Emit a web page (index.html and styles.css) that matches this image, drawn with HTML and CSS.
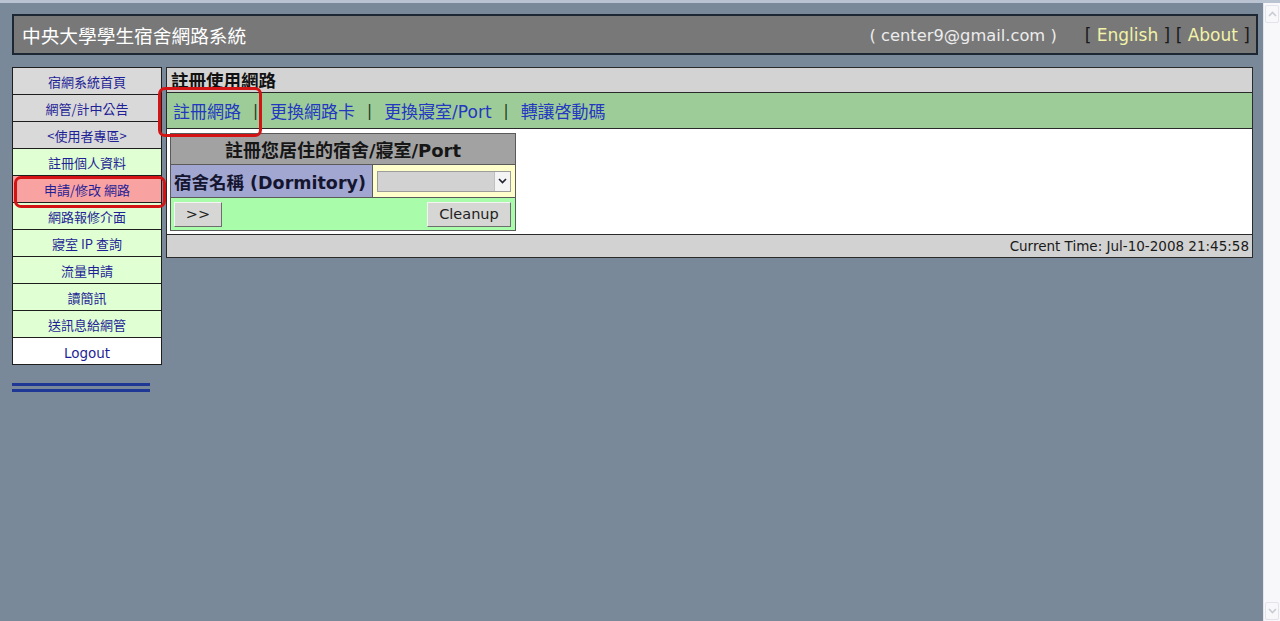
FILE: index.html
```html
<!DOCTYPE html>
<html lang="zh-Hant">
<head>
  <meta charset="UTF-8">
  <title>中央大學學生宿舍網路系統</title>
  <link rel="stylesheet" href="styles.css">
</head>
<body>

<div class="window">
  <div class="viewport">

    <header class="topbar">
      <div class="site-title">中央大學學生宿舍網路系統</div>
      <div class="topbar-right">
        <span class="email">( center9@gmail.com )</span>
        <span class="langs"><span class="br">[</span> <a href="#">English</a> <span class="br">]</span> <span class="br">[</span> <a href="#">About</a> <span class="br">]</span></span>
      </div>
    </header>

    <div class="layout">
      <aside class="sidebar">
        <ul class="menu">
          <li class="grey"><a href="#">宿網系統首頁</a></li>
          <li class="grey"><a href="#">網管/計中公告</a></li>
          <li class="grey"><a href="#">&lt;使用者專區&gt;</a></li>
          <li class="green"><a href="#">註冊個人資料</a></li>
          <li class="pink"><a href="#">申請/修改 網路</a><span class="mark mark-menu"></span></li>
          <li class="green"><a href="#">網路報修介面</a></li>
          <li class="green"><a href="#">寢室 IP 查詢</a></li>
          <li class="green"><a href="#">流量申請</a></li>
          <li class="green"><a href="#">讀簡訊</a></li>
          <li class="green"><a href="#">送訊息給網管</a></li>
          <li class="white"><a href="#" class="latin">Logout</a></li>
        </ul>
        <div class="double-rule"></div>
      </aside>

      <main class="panel">
        <div class="panel-title">註冊使用網路</div>
        <nav class="subnav">
          <a href="#">註冊網路</a>
          <span class="sep">|</span>
          <a href="#">更換網路卡</a>
          <span class="sep">|</span>
          <a href="#">更換寢室/Port</a>
          <span class="sep">|</span>
          <a href="#">轉讓啓動碼</a>
          <span class="mark mark-nav"></span>
        </nav>
        <div class="panel-body">
          <table class="reg-form">
            <tr>
              <th colspan="2">註冊您居住的宿舍/寢室/Port</th>
            </tr>
            <tr>
              <td class="label">宿舍名稱 (Dormitory)</td>
              <td class="field">
                <div class="select">
                  <span class="select-value"></span>
                  <span class="select-arrow">
                    <svg width="9" height="6" viewBox="0 0 9 6"><path d="M1 1 L4.5 4.5 L8 1" fill="none" stroke="#223" stroke-width="1.6"/></svg>
                  </span>
                </div>
              </td>
            </tr>
            <tr class="actions">
              <td colspan="2">
                <div class="btn-row">
                  <button type="button">&gt;&gt;</button>
                  <button type="button">Cleanup</button>
                </div>
              </td>
            </tr>
          </table>
        </div>
        <div class="panel-foot">Current Time: Jul-10-2008 21:45:58</div>
      </main>
    </div>

  </div>

  <div class="scrollbar">
    <span class="sb-btn">
      <svg width="9" height="6" viewBox="0 0 9 6"><path d="M1 5 L4.5 1.5 L8 5" fill="none" stroke="#c8ccd4" stroke-width="1.6"/></svg>
    </span>
    <span class="sb-btn">
      <svg width="9" height="6" viewBox="0 0 9 6"><path d="M1 1 L4.5 4.5 L8 1" fill="none" stroke="#c8ccd4" stroke-width="1.6"/></svg>
    </span>
  </div>
</div>

</body>
</html>
```

FILE: styles.css
```css
body {
  margin: 0;
  font-family: "DejaVu Sans", "Noto Sans CJK TC", sans-serif;
  background: #7a8999;
  overflow: hidden;
}

a {
  text-decoration: none;
}

.window {
  display: flex;
  height: 621px;
  box-sizing: border-box;
  border-top: 3px solid #b9c3d1;
}

.viewport {
  flex: 1;
  min-width: 0;
}

/* top bar */
.topbar {
  margin: 11px 5px 0 12px;
  height: 41px;
  box-sizing: border-box;
  border: 2px solid #1d2633;
  background: #787878;
  display: flex;
  justify-content: space-between;
  align-items: center;
  padding: 0 6px 0 8px;
}

.site-title {
  font-family: "Noto Sans CJK TC", sans-serif;
  font-size: 18.7px;
  color: #fff;
}

.topbar-right {
  display: flex;
  align-items: baseline;
  gap: 28px;
}

.email {
  color: #ececec;
  font-size: 16.3px;
}

.langs {
  color: #1a1a1a;
  font-size: 17px;
}

.langs a {
  color: #f2f2a8;
}

.br {
  color: #1a1a1a;
}

/* layout */
.layout {
  display: flex;
  gap: 4px;
  margin: 12px 10px 0 12px;
  align-items: flex-start;
}

.sidebar {
  width: 150px;
  flex: none;
}

.menu {
  list-style: none;
  margin: 0;
  padding: 0;
  border: 1px solid #1e1e1e;
  border-bottom: none;
}

.menu li {
  position: relative;
  height: 26px;
  border-bottom: 1px solid #1e1e1e;
  display: flex;
  align-items: center;
  justify-content: center;
}

.menu a {
  font-family: "Noto Sans CJK TC", sans-serif;
  font-size: 13px;
  color: #1f1f96;
}

.menu a.latin {
  font-family: "DejaVu Sans", sans-serif;
  font-size: 13.5px;
  padding-top: 3px;
}

.menu .grey {
  background: #d9d9d9;
}

.menu .green {
  background: #e0ffd2;
}

.menu .pink {
  background: #f9a2a2;
}

.menu .white {
  background: #fff;
}

.double-rule {
  width: 138px;
  height: 3px;
  margin-top: 18px;
  border-top: 3px solid #1f3795;
  border-bottom: 3px solid #1f3795;
}

/* red annotation boxes */
.mark {
  position: absolute;
  z-index: 2;
  border: 3px solid #d41414;
  border-radius: 7px;
  pointer-events: none;
}

.mark-menu {
  top: 0;
  left: 1px;
  right: -5px;
  bottom: -6px;
}

.mark-nav {
  top: -6px;
  left: -9px;
  width: 98px;
  height: 44px;
}

/* main panel */
.panel {
  flex: 1;
  border: 1px solid #2a2a2a;
  background: #fff;
}

.panel-title {
  height: 24px;
  line-height: 24px;
  background: #d3d3d3;
  border-bottom: 1px solid #2a2a2a;
  padding-left: 4px;
  font-family: "Noto Sans CJK TC", sans-serif;
  font-weight: bold;
  font-size: 17.5px;
  color: #111;
}

.subnav {
  position: relative;
  height: 35px;
  background: #9dcc98;
  border-bottom: 1px solid #2a2a2a;
  display: flex;
  align-items: center;
  padding-left: 6px;
  gap: 12px;
  font-size: 17px;
}

.subnav a {
  color: #2337c0;
}

.sep {
  color: #1d3a1d;
  font-size: 15px;
}

.panel-body {
  height: 106px;
  border-bottom: 1px solid #2a2a2a;
  padding: 4px 0 0 3px;
  box-sizing: border-box;
}

.reg-form {
  width: 346px;
  border-collapse: collapse;
  border: 1px solid #5a5a5a;
}

.reg-form th {
  height: 30px;
  padding: 0;
  background: #a2a2a2;
  border-bottom: 1px solid #5a5a5a;
  font-size: 18px;
  font-weight: bold;
  color: #161616;
  text-align: center;
}

.reg-form td {
  padding: 0;
}

.reg-form .label {
  width: 198px;
  height: 32px;
  background: #a1a7d1;
  border-right: 1px solid #5a5a5a;
  border-bottom: 1px solid #5a5a5a;
  padding-left: 3px;
  font-size: 17.5px;
  font-weight: bold;
  color: #151530;
  white-space: nowrap;
}

.reg-form .field {
  background: #ffffcc;
  border-bottom: 1px solid #5a5a5a;
  padding: 0 4px;
}

.select {
  display: flex;
  height: 21px;
  box-sizing: border-box;
  border: 1px solid #9c9c9c;
  background: #d2d2d2;
}

.select-value {
  flex: 1;
}

.select-arrow {
  width: 15px;
  background: #f4f4f4;
  border-left: 1px solid #c0c0c0;
  display: flex;
  align-items: center;
  justify-content: center;
}

.actions td {
  height: 32px;
  background: #a9fca9;
}

.btn-row {
  display: flex;
  justify-content: space-between;
  padding: 0 4px 0 3px;
}

.btn-row button {
  height: 25px;
  padding: 0 10px;
  background: #d6d6d4;
  border: 1px solid;
  border-color: #f4f4f4 #6e6e6e #6e6e6e #f4f4f4;
  font-family: "DejaVu Sans", sans-serif;
  font-size: 14.5px;
  color: #222;
}

.btn-row button:first-child {
  width: 48px;
}

.btn-row button:last-child {
  width: 84px;
}

.panel-foot {
  height: 22px;
  line-height: 22px;
  background: #d2d2d2;
  text-align: right;
  padding-right: 3px;
  font-size: 13.5px;
  color: #1a1a1a;
}

/* fake scrollbar */
.scrollbar {
  width: 16px;
  flex: none;
  border-left: 1px solid #e4e6ec;
  background: #f8f8fb;
  display: flex;
  flex-direction: column;
  justify-content: space-between;
  padding: 2px 0 1px;
}

.sb-btn {
  height: 16px;
  margin: 0 1px;
  border: 1px solid #e2e4ea;
  border-radius: 2px;
  display: flex;
  align-items: center;
  justify-content: center;
}
```
